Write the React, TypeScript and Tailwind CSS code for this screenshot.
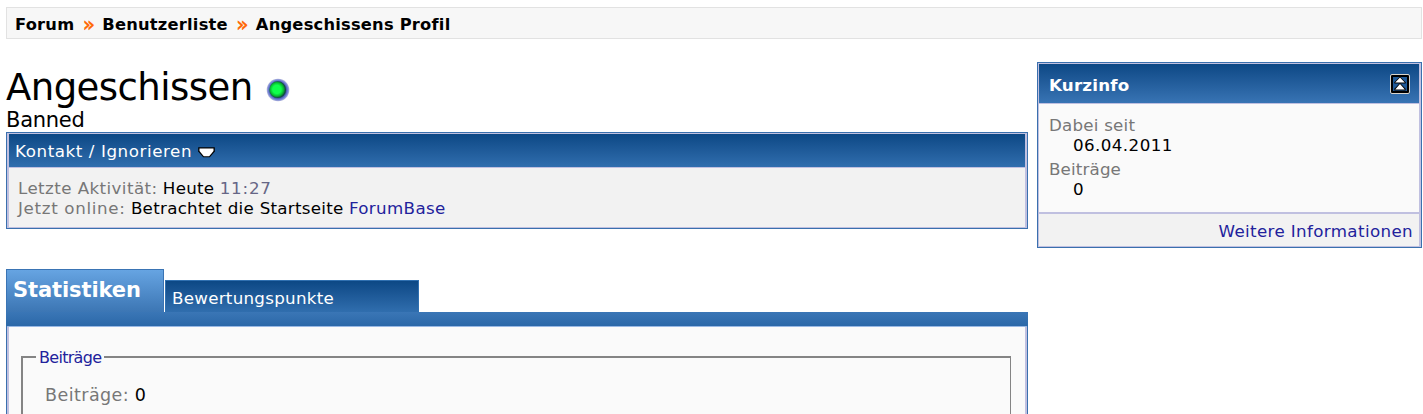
import type { ReactNode } from 'react';

function StatusDot() {
  return (
    <svg width="24" height="24" viewBox="0 0 24 24" className="ml-[13px] mt-[4px]">
      <defs>
        <radialGradient id="ring">
          <stop offset="0.7" stopColor="#3c50a0" />
          <stop offset="0.86" stopColor="#7080d4" />
          <stop offset="1" stopColor="#b4b8dc" />
        </radialGradient>
        <radialGradient id="dot" cx="0.45" cy="0.48">
          <stop offset="0.5" stopColor="#10ff4c" />
          <stop offset="0.8" stopColor="#08b830" />
          <stop offset="1" stopColor="#105040" />
        </radialGradient>
      </defs>
      <circle cx="12" cy="12" r="11.3" fill="url(#ring)" />
      <circle cx="11.7" cy="11.7" r="8.4" fill="url(#dot)" />
    </svg>
  );
}

function MenuArrow() {
  return (
    <svg width="17" height="11" viewBox="0 0 17 11" className="ml-[6px] mt-[2px]">
      <path d="M0.2 0.2H16.8V4.4L11.8 10.2H5.2L0.2 4.4Z" fill="#000" />
      <path d="M1.5 1.5H15.5V4L11.2 9.3H5.8L1.5 4Z" fill="#fff" />
    </svg>
  );
}

function CollapseIcon() {
  return (
    <svg width="20" height="20" viewBox="0 0 20 20">
      <rect x="0.5" y="0.5" width="19" height="19" rx="1.5" fill="#000" stroke="#d8d4cc" />
      <rect x="3" y="3" width="14" height="14" fill="#205a98" />
      <path d="M10 2.5L15.6 8.2V9.6H4.4V8.2Z" fill="#000" />
      <path d="M10 3.6L14.8 8.6H5.2Z" fill="#fff" />
      <path d="M10 9L15.6 14.7V16.4H4.4V14.7Z" fill="#000" />
      <path d="M10 10L14.8 15.4H5.2Z" fill="#fff" />
    </svg>
  );
}

function Raquo() {
  return (
    <span className="mr-[7px] ml-2 w-[13px] pb-[2px] text-center text-[20px] leading-5 font-normal tracking-normal text-[#ff6600] [-webkit-text-stroke:0.5px_#ff6600]">
      »
    </span>
  );
}

function Label({ children, className = '' }: { children: ReactNode; className?: string }) {
  return <span className={`text-[#777777] ${className}`}>{children}</span>;
}

export default function App() {
  return (
    <div
      className="h-[414px] w-[1423px] overflow-hidden bg-white pt-[7px] pl-[6px] text-[16.7px] leading-5 whitespace-nowrap text-black"
      style={{ fontFamily: 'Verdana, "DejaVu Sans", sans-serif' }}
    >
      {/* Breadcrumb */}
      <nav className="flex h-8 w-[1416px] items-center border border-[#e2e2e2] bg-[#f7f7f7] pt-[3px] pl-2 text-[16.3px] font-bold tracking-[0.22px]">
        <a>Forum</a>
        <Raquo />
        <a>Benutzerliste</a>
        <Raquo />
        <span>Angeschissens Profil</span>
      </nav>

      <div className="flex">
        <main className="w-[1022px]">
          <h1 className="mt-[23px] flex h-[46px] items-center pt-[5px] text-[37px] leading-[46px] tracking-[-0.55px]">
            Angeschissen
            <StatusDot />
          </h1>
          <h2 className="h-6 text-[21px] leading-6 tracking-[-0.28px]">Banned</h2>

          <section className="h-[97px] border border-[#3a70ae] bg-[#c0c0e0] px-[2px] py-px">
            <div className="flex h-[33px] items-center bg-linear-to-b from-[#0c4885] to-[#306eae] pt-px pl-[6px] tracking-[0.58px] text-white">
              Kontakt / Ignorieren
              <MenuArrow />
            </div>
            <div className="mt-px h-[59px] bg-[#f2f2f2] pt-[10px] pl-[9px]">
              <div>
                <Label className="tracking-[0.42px]">Letzte Aktivität:</Label>{' '}
                <span className="tracking-[0.25px]">Heute</span>{' '}
                <span className="tracking-[0.8px] text-[#666686]">11:27</span>
              </div>
              <div>
                <Label className="tracking-[0.67px]">Jetzt online:</Label>{' '}
                <span className="tracking-[0.28px]">Betrachtet die Startseite</span>{' '}
                <a className="tracking-[0.35px] text-[#22229c]">ForumBase</a>
              </div>
            </div>
          </section>

          {/* Tabs */}
          <div className="mt-10 flex h-[43px] items-end gap-px">
            <div className="h-[43px] w-[158px] border border-b-0 border-[#3a74b4] bg-linear-to-b from-[#66a4e2] to-[#3c76b4] pt-2 pl-[6px] text-[21px] leading-6 font-bold tracking-[-0.1px] text-white">
              Statistiken
            </div>
            <div className="h-8 w-[254px] border border-b-0 border-[#3070b0] bg-linear-to-b from-[#0c4885] to-[#306eae] pt-[7px] pl-[6px] tracking-[0.27px] text-white">
              Bewertungspunkte
            </div>
          </div>
          <div className="h-[14px] bg-linear-to-b from-[#3a76b6] to-[#2b68a8]" />
          <section className="h-[100px] border-x border-[#3a70ae] bg-[#c0c0e0] px-[2px]">
            <div className="-mx-[2px] h-px bg-[#98b8e4]" />
            <div className="h-[99px] bg-[#fafafa] pt-[21px] pl-3">
              <fieldset className="-mt-px h-[120px] w-[990px] border-t-2 border-r border-l-2 border-[#848484] pl-[22px]">
                <legend className="-ml-[9px] h-5 px-[3px] pt-px text-[16px] tracking-[-0.7px] text-[#22229c]">
                  Beiträge
                </legend>
                <div className="mt-[18px] text-[17.5px]">
                  <Label className="tracking-[0.44px]">Beiträge:</Label> 0
                </div>
              </fieldset>
            </div>
          </section>
        </main>

        <aside className="mt-[23px] ml-[9px] h-[186px] w-[385px] border border-[#3a70ae] bg-[#c0c0e0] py-px pr-[2px] pl-px">
          <div className="flex h-[39px] items-center justify-between bg-linear-to-b from-[#0c4885] to-[#3874b4] pt-px pr-[9px] pl-[10px] font-bold tracking-[0.2px] text-white">
            <span className="pt-px">Kurzinfo</span>
            <CollapseIcon />
          </div>
          <dl className="mt-px h-[108px] bg-[#fafafa] pt-[11px] pl-[10px]">
            <dt className="tracking-[0.22px] text-[#777777]">Dabei seit</dt>
            <dd className="mb-1 pl-6 tracking-[0.42px]">06.04.2011</dd>
            <dt className="tracking-[0.15px] text-[#777777]">Beiträge</dt>
            <dd className="pl-6">0</dd>
          </dl>
          <div className="mt-[2px] flex h-8 items-center justify-end bg-[#f2f2f2] pt-[2px] pr-[6px] tracking-[0.37px] text-[#22229c]">
            <a>Weitere Informationen</a>
          </div>
        </aside>
      </div>
    </div>
  );
}
